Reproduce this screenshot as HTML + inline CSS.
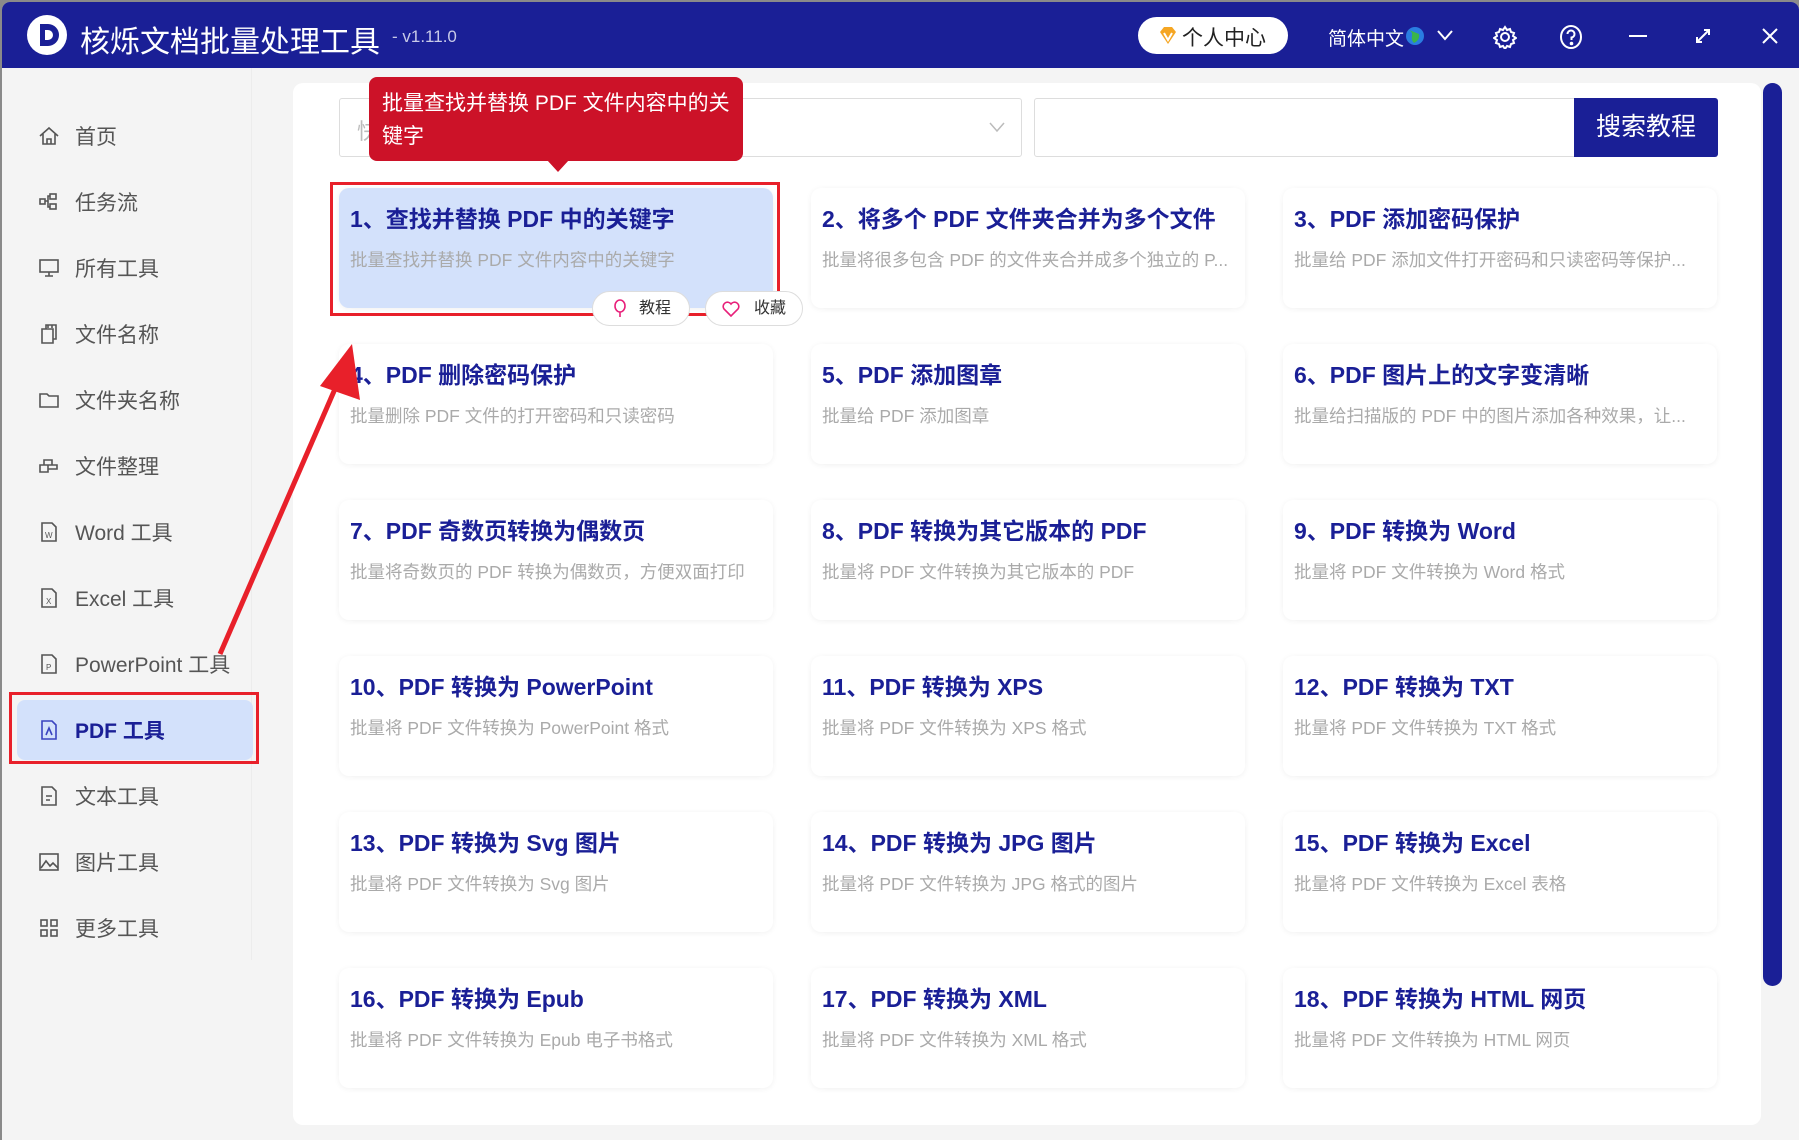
<!DOCTYPE html>
<html><head><meta charset="utf-8"><style>
*{margin:0;padding:0;box-sizing:border-box}
body{width:1799px;height:1140px;overflow:hidden;background:#8a8a8a;font-family:"Liberation Sans","Noto Sans CJK SC",sans-serif;position:relative}
.win{position:absolute;left:2px;top:2px;width:1797px;height:1138px;background:#f4f4f4;border-radius:8px 8px 0 0;overflow:hidden}
.hdr{position:absolute;left:0;top:0;width:100%;height:66px;background:#1a1f96}
.abs{position:absolute}
.side{position:absolute;left:0;top:66px;width:250px;height:892px;border-right:1px solid #ececec}
.si{position:absolute;left:36px;height:30px;display:flex;align-items:center;font-size:21px;color:#555}
.si svg{width:22px;height:22px;margin-right:15px}
.main{position:absolute;left:291px;top:81px;width:1468px;height:1042px;background:#fff;border-radius:10px}
.card{position:absolute;width:434px;height:120px;background:#fff;border-radius:10px;box-shadow:0 1px 6px rgba(0,0,0,.06)}
.card .t{position:absolute;left:11px;top:12px;font-size:23px;font-weight:bold;color:#1a1f96;white-space:nowrap}
.card .d{position:absolute;left:11px;top:59px;font-size:17.5px;color:#aaa;white-space:nowrap}
</style></head><body>
<div class="win">
<div class="hdr">
 <svg class="abs" style="left:24px;top:12px" width="42" height="42"><circle cx="21" cy="21" r="20" fill="#fff"/><path d="M14 10h8a11 11 0 0 1 0 22h-8z" fill="#1a1f96"/><path d="M19 16h3a5 5 0 0 1 0 10h-3z" fill="#fff"/></svg>
 <div class="abs" style="left:78px;top:15px;font-size:30px;color:#fff">核烁文档批量处理工具</div>
 <div class="abs" style="left:390px;top:25px;font-size:17px;color:#c8cae8">- v1.11.0</div>
 <div class="abs" style="left:1136px;top:15px;width:150px;height:37px;background:#fff;border-radius:19px"></div>
 <svg class="abs" style="left:1156px;top:24px" width="20" height="20"><path d="M2 6l4-5h8l4 5-8 12z" fill="#f5a623"/><path d="M6 7l4 7 4-7" stroke="#fff" stroke-width="2" fill="none"/></svg>
 <div class="abs" style="left:1180px;top:20px;font-size:21px;color:#222">个人中心</div>
 <div class="abs" style="left:1326px;top:22px;font-size:19px;color:#fff">简体中文</div>
 <svg class="abs" style="left:1403px;top:24px" width="20" height="20"><circle cx="10" cy="10" r="9" fill="#2a7de1"/><path d="M4 4q4 2 3 6t2 7q6-3 5-9" fill="#3bb54a"/></svg>
 <svg class="abs" style="left:1435px;top:27px" width="16" height="12"><path d="M1 2l7 8 7-8" stroke="#fff" stroke-width="2" fill="none"/></svg>
 <svg class="abs" style="left:1491px;top:23px" width="24" height="24" fill="none" stroke="#fff" stroke-width="2"><circle cx="12" cy="12" r="4"/><path d="M12 2l2 3 3-1 1 3 3 1-1 3 3 2-3 2 1 3-3 1-1 3-3-1-2 3-2-3-3 1-1-3-3-1 1-3-3-2 3-2-1-3 3-1 1-3 3 1z"/></svg>
 <svg class="abs" style="left:1557px;top:22px" width="24" height="26" fill="none" stroke="#fff" stroke-width="2"><ellipse cx="12" cy="13" rx="10" ry="11"/><path d="M8.5 10a3.5 3.5 0 1 1 4 3.5V16"/><circle cx="12.5" cy="19.5" r=".8" fill="#fff"/></svg>
 <div class="abs" style="left:1627px;top:33px;width:18px;height:2px;background:#fff"></div>
 <svg class="abs" style="left:1692px;top:25px" width="18" height="18" stroke="#fff" stroke-width="2" fill="none"><path d="M3 15L15 3M10 3h5v5M3 10v5h5"/></svg>
 <svg class="abs" style="left:1759px;top:25px" width="18" height="18" stroke="#fff" stroke-width="2"><path d="M2 2l14 14M16 2L2 16"/></svg>
</div>

<div class="side">
 <div class="si" style="top:53px"><svg viewBox="0 0 22 22" fill="none" stroke="#555" stroke-width="1.6"><path d="M2 11L11 3l9 8M5 9v10h12V9M9 19v-5h4v5"/></svg>首页</div>
 <div class="si" style="top:119px"><svg viewBox="0 0 22 22" fill="none" stroke="#555" stroke-width="1.6"><rect x="2" y="8" width="5" height="5"/><rect x="12" y="3" width="6" height="5"/><rect x="12" y="13" width="6" height="5"/><path d="M7 10h3V5h2M10 10v6h2"/></svg>任务流</div>
 <div class="si" style="top:185px"><svg viewBox="0 0 22 22" fill="none" stroke="#555" stroke-width="1.6"><rect x="2" y="3" width="18" height="12"/><path d="M11 15v4M7 19h8"/></svg>所有工具</div>
 <div class="si" style="top:251px"><svg viewBox="0 0 22 22" fill="none" stroke="#555" stroke-width="1.6"><path d="M4 6h11v14H4zM8 6V2h10v14h-3M10 2v3M14 2v3"/></svg>文件名称</div>
 <div class="si" style="top:317px"><svg viewBox="0 0 22 22" fill="none" stroke="#555" stroke-width="1.6"><path d="M2 5h7l2 2h9v11H2z"/></svg>文件夹名称</div>
 <div class="si" style="top:383px"><svg viewBox="0 0 22 22" fill="none" stroke="#555" stroke-width="1.6"><path d="M2 10h8v7H2zM6 10V5h8v5M10 10h9v4h-9"/></svg>文件整理</div>
 <div class="si" style="top:449px"><svg viewBox="0 0 22 22" fill="none" stroke="#555" stroke-width="1.6"><path d="M4 2h10l4 4v14H4z"/><text x="7" y="17" font-size="8" fill="#555" stroke="none">W</text></svg>Word 工具</div>
 <div class="si" style="top:515px"><svg viewBox="0 0 22 22" fill="none" stroke="#555" stroke-width="1.6"><path d="M4 2h10l4 4v14H4z"/><text x="8" y="17" font-size="8" fill="#555" stroke="none">X</text></svg>Excel 工具</div>
 <div class="si" style="top:581px"><svg viewBox="0 0 22 22" fill="none" stroke="#555" stroke-width="1.6"><path d="M4 2h10l4 4v14H4z"/><text x="8" y="17" font-size="8" fill="#555" stroke="none">P</text></svg>PowerPoint 工具</div>
 <div class="abs" style="left:15px;top:632px;width:236px;height:60px;background:#d3e1fb;border-radius:8px"></div>
 <div class="si" style="top:647px;color:#1a1f96;font-weight:bold"><svg viewBox="0 0 22 22" fill="none" stroke="#3a44c0" stroke-width="1.6"><path d="M4 2h10l4 4v14H4z"/><path d="M8 16l3-7 3 7"/></svg>PDF 工具</div>
 <div class="si" style="top:713px"><svg viewBox="0 0 22 22" fill="none" stroke="#555" stroke-width="1.6"><path d="M4 2h10l4 4v14H4zM8 11h6M8 15h4"/></svg>文本工具</div>
 <div class="si" style="top:779px"><svg viewBox="0 0 22 22" fill="none" stroke="#555" stroke-width="1.6"><rect x="2" y="3" width="18" height="16"/><path d="M3 17l5-7 4 5 3-3 5 5"/></svg>图片工具</div>
 <div class="si" style="top:845px"><svg viewBox="0 0 22 22" fill="none" stroke="#555" stroke-width="1.6"><rect x="3" y="3" width="6" height="6"/><rect x="13" y="3" width="6" height="6"/><rect x="3" y="13" width="6" height="6"/><rect x="13" y="13" width="6" height="6"/></svg>更多工具</div>
</div>
<div class="abs" style="left:7px;top:690px;width:250px;height:72px;border:3px solid #e8202a"></div>

<div class="main"></div>
<div class="abs" style="left:337px;top:96px;width:683px;height:59px;border:1px solid #ddd;border-radius:3px"></div>
<div class="abs" style="left:355px;top:112px;font-size:22px;color:#bbb">快</div>
<svg class="abs" style="left:987px;top:119px" width="16" height="12"><path d="M1 2l7 8 7-8" stroke="#bbb" stroke-width="1.5" fill="none"/></svg>
<div class="abs" style="left:1032px;top:96px;width:542px;height:59px;border:1px solid #ddd;border-radius:3px 0 0 3px"></div>
<div class="abs" style="left:1572px;top:96px;width:144px;height:59px;background:#1a1f96;border-radius:0 3px 3px 0;color:#fff;font-size:25px;text-align:center;line-height:59px">搜索教程</div>
<div class="abs" style="left:1761px;top:81px;width:19px;height:903px;background:#1a1f96;border-radius:10px"></div>

<div class="card" style="left:337px;top:186px;background:#d3e1fb"><div class="t">1、查找并替换 PDF 中的关键字</div><div class="d">批量查找并替换 PDF 文件内容中的关键字</div></div>
<div class="card" style="left:809px;top:186px"><div class="t">2、将多个 PDF 文件夹合并为多个文件</div><div class="d">批量将很多包含 PDF 的文件夹合并成多个独立的 P...</div></div>
<div class="card" style="left:1281px;top:186px"><div class="t">3、PDF 添加密码保护</div><div class="d">批量给 PDF 添加文件打开密码和只读密码等保护...</div></div>
<div class="card" style="left:337px;top:342px"><div class="t">4、PDF 删除密码保护</div><div class="d">批量删除 PDF 文件的打开密码和只读密码</div></div>
<div class="card" style="left:809px;top:342px"><div class="t">5、PDF 添加图章</div><div class="d">批量给 PDF 添加图章</div></div>
<div class="card" style="left:1281px;top:342px"><div class="t">6、PDF 图片上的文字变清晰</div><div class="d">批量给扫描版的 PDF 中的图片添加各种效果，让...</div></div>
<div class="card" style="left:337px;top:498px"><div class="t">7、PDF 奇数页转换为偶数页</div><div class="d">批量将奇数页的 PDF 转换为偶数页，方便双面打印</div></div>
<div class="card" style="left:809px;top:498px"><div class="t">8、PDF 转换为其它版本的 PDF</div><div class="d">批量将 PDF 文件转换为其它版本的 PDF</div></div>
<div class="card" style="left:1281px;top:498px"><div class="t">9、PDF 转换为 Word</div><div class="d">批量将 PDF 文件转换为 Word 格式</div></div>
<div class="card" style="left:337px;top:654px"><div class="t">10、PDF 转换为 PowerPoint</div><div class="d">批量将 PDF 文件转换为 PowerPoint 格式</div></div>
<div class="card" style="left:809px;top:654px"><div class="t">11、PDF 转换为 XPS</div><div class="d">批量将 PDF 文件转换为 XPS 格式</div></div>
<div class="card" style="left:1281px;top:654px"><div class="t">12、PDF 转换为 TXT</div><div class="d">批量将 PDF 文件转换为 TXT 格式</div></div>
<div class="card" style="left:337px;top:810px"><div class="t">13、PDF 转换为 Svg 图片</div><div class="d">批量将 PDF 文件转换为 Svg 图片</div></div>
<div class="card" style="left:809px;top:810px"><div class="t">14、PDF 转换为 JPG 图片</div><div class="d">批量将 PDF 文件转换为 JPG 格式的图片</div></div>
<div class="card" style="left:1281px;top:810px"><div class="t">15、PDF 转换为 Excel</div><div class="d">批量将 PDF 文件转换为 Excel 表格</div></div>
<div class="card" style="left:337px;top:966px"><div class="t">16、PDF 转换为 Epub</div><div class="d">批量将 PDF 文件转换为 Epub 电子书格式</div></div>
<div class="card" style="left:809px;top:966px"><div class="t">17、PDF 转换为 XML</div><div class="d">批量将 PDF 文件转换为 XML 格式</div></div>
<div class="card" style="left:1281px;top:966px"><div class="t">18、PDF 转换为 HTML 网页</div><div class="d">批量将 PDF 文件转换为 HTML 网页</div></div>

<div class="abs" style="left:328px;top:180px;width:450px;height:134px;border:3px solid #e8202a"></div>
<div class="abs" style="left:590px;top:289px;width:98px;height:35px;background:#fff;border:1px solid #ddd;border-radius:18px;font-size:16px;color:#333;line-height:33px;padding-left:46px">教程</div>
<svg class="abs" style="left:610px;top:297px" width="16" height="20"><ellipse cx="8" cy="7" rx="5" ry="6" fill="none" stroke="#e8207a" stroke-width="1.6"/><path d="M8 13v5" stroke="#e8207a" stroke-width="1.6"/></svg>
<div class="abs" style="left:703px;top:289px;width:98px;height:35px;background:#fff;border:1px solid #ddd;border-radius:18px;font-size:16px;color:#333;line-height:33px;padding-left:48px">收藏</div>
<svg class="abs" style="left:720px;top:299px" width="18" height="16"><path d="M9 15L2 8a4 4 0 0 1 7-5 4 4 0 0 1 7 5z" fill="none" stroke="#e8207a" stroke-width="1.6"/></svg>

<div class="abs" style="left:367px;top:75px;width:374px;height:84px;background:#cc1228;border-radius:8px;color:#fff;font-size:21px;line-height:33px;padding:10px 12px 0 13px">批量查找并替换 PDF 文件内容中的关键字</div>
<div class="abs" style="left:545px;top:158px;width:0;height:0;border-left:11px solid transparent;border-right:11px solid transparent;border-top:12px solid #cc1228"></div>

<svg class="abs" style="left:0;top:0" width="1799" height="1140"><path d="M218 652L336 380" stroke="#e8202a" stroke-width="5"/><path d="M350 342L358 398L318 384z" fill="#e8202a"/></svg>
</div>
</body></html>
